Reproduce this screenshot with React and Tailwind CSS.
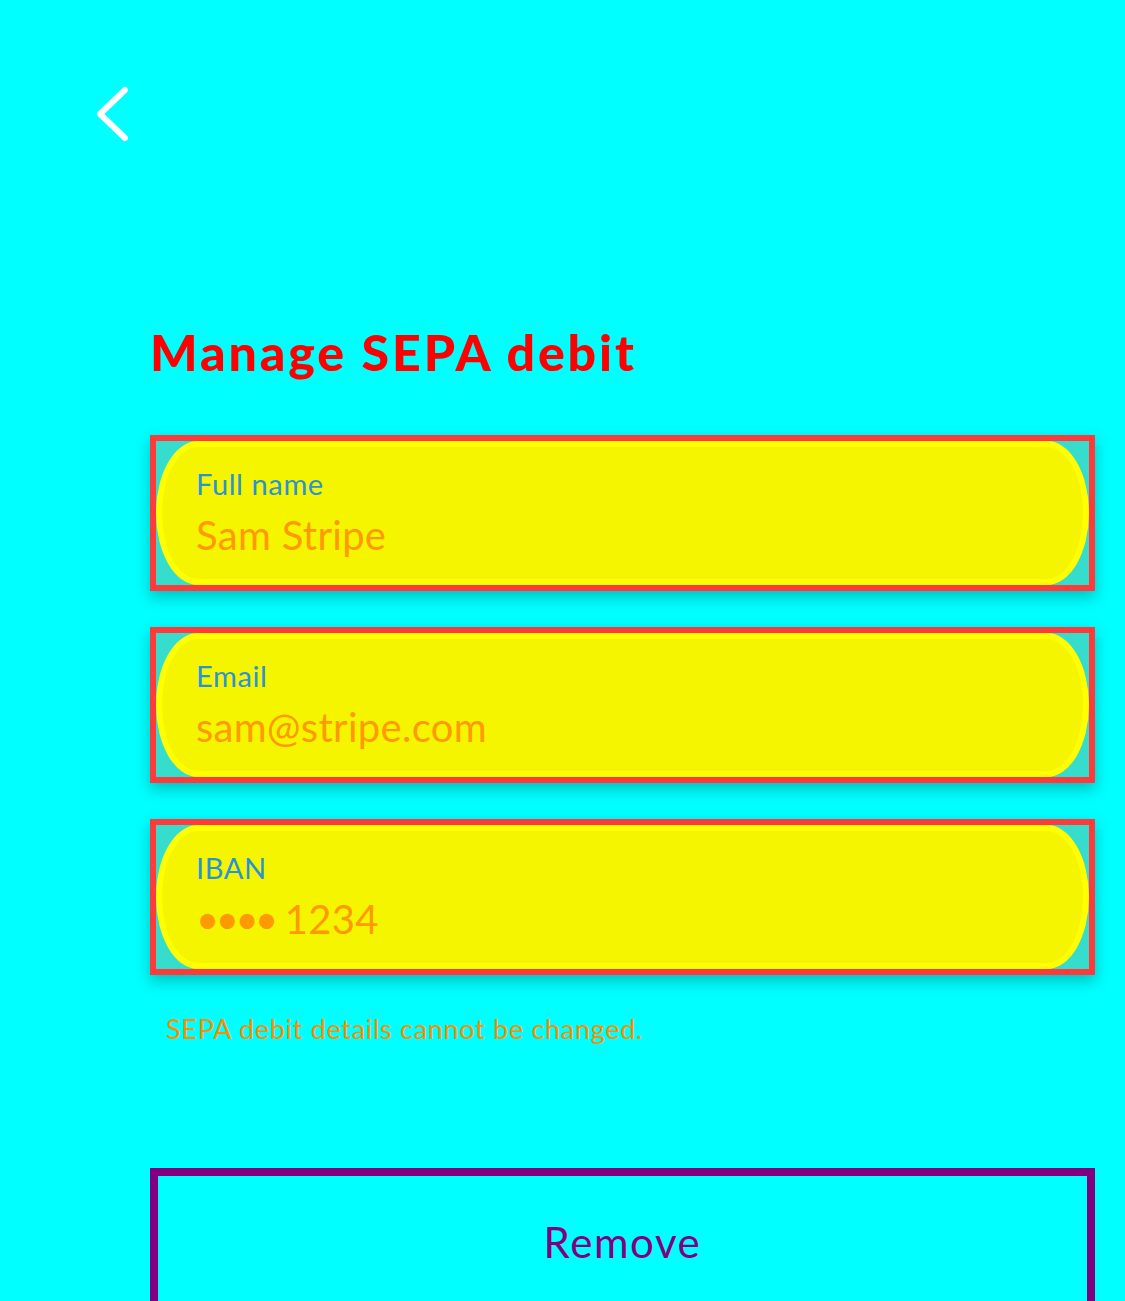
export default function App() {
  const fields = [
    { label: "Full name", value: "Sam Stripe" },
    { label: "Email", value: "sam@stripe.com" },
    { label: "IBAN", value: "•••• 1234", dots: true },
  ];

  return (
    <div className="min-h-[1301px] w-full overflow-hidden bg-[#00ffff] font-['Lato',sans-serif]">
      {/* back */}
      <div className="pl-[93px] pt-[84px]">
        <svg width="40" height="60" viewBox="0 0 40 60" fill="none">
          <path d="M32 6 L7 30 L32 54" stroke="#ffffff" strokeWidth="6" strokeLinecap="round" strokeLinejoin="round" />
        </svg>
      </div>

      <div className="pl-[150px] pr-[30px]">
        <h1 className="mt-[178px] text-[50px] font-black leading-[60px] tracking-[2.9px] text-[#ff0000]">
          Manage SEPA debit
        </h1>

        <div className="mt-[53px] flex flex-col gap-[36px]">
          {fields.map((f) => (
            <div
              key={f.label}
              className="h-[156px] border-[6px] border-[#ff3a3a] bg-[#36dccc] shadow-[0_6px_14px_rgba(0,0,0,0.25)]"
            >
              <div className="flex h-full flex-col justify-center rounded-[42px_/_72px] border-[6px] border-[#ffff00] bg-[#f5f500] pl-[34px]">
                <div className="text-[29px] leading-[34px] tracking-[0.6px] text-[#2a93d6]">{f.label}</div>
                <div className="mt-[10px] flex items-center text-[40px] leading-[48px] tracking-[0.3px] text-[#ff9900]">
                  {f.dots ? (
                    <>
                      <span className="text-[40px] leading-[48px] tracking-[-3.5px]">••••</span>
                      <span className="ml-[10px]">1234</span>
                    </>
                  ) : (
                    f.value
                  )}
                </div>
              </div>
            </div>
          ))}
        </div>

        <p className="mt-[38px] pl-[16px] text-[27px] leading-[32px] tracking-[0.7px] text-[#ff8c00]">
          SEPA debit details cannot be changed.
        </p>

        <button className="mt-[123px] flex h-[150px] w-full items-start justify-center border-[8px] border-[#800080] bg-transparent pt-[42px] text-[42px] leading-[48px] tracking-[1.6px] text-[#800080]">
          Remove
        </button>
      </div>
    </div>
  );
}
